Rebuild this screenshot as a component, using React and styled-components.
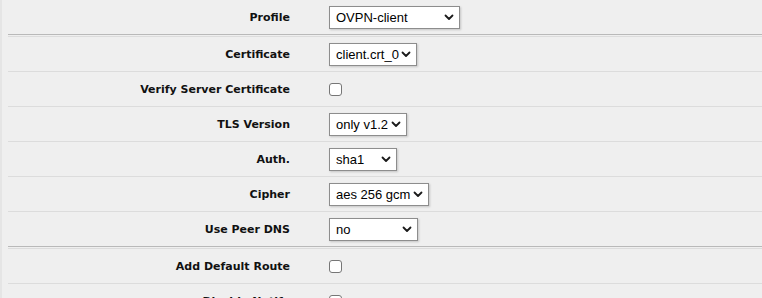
import React from 'react'
import styled, { createGlobalStyle } from 'styled-components'

const GlobalStyle = createGlobalStyle`
    body {
        margin: 0;
        background: #efefef;
        font-family: "DejaVu Sans", Verdana, sans-serif;
    }
`

const rows = [
    { label: 'Profile', type: 'select', value: 'OVPN-client', width: 131, sectionEnd: true },
    { label: 'Certificate', type: 'select', value: 'client.crt_0', width: 88 },
    { label: 'Verify Server Certificate', type: 'checkbox' },
    { label: 'TLS Version', type: 'select', value: 'only v1.2', width: 78 },
    { label: 'Auth.', type: 'select', value: 'sha1', width: 68 },
    { label: 'Cipher', type: 'select', value: 'aes 256 gcm', width: 100 },
    { label: 'Use Peer DNS', type: 'select', value: 'no', width: 89, sectionEnd: true },
    { label: 'Add Default Route', type: 'checkbox' },
    { label: 'Disable Notify', type: 'checkbox' },
]

function Chevron() {
    return (
        <svg width="10" height="7" viewBox="0 0 10 7">
            <path d="M1.5 1.5 L5 5 L8.5 1.5" fill="none" stroke="#1a1a1a" strokeWidth="1.8" strokeLinecap="round" strokeLinejoin="round" />
        </svg>
    )
}

function Field({ row }) {
    if (row.type === 'checkbox') {
        return <Checkbox type="checkbox" readOnly />
    }
    return (
        <SelectWrap $width={row.width}>
            <Select defaultValue={row.value}>
                <option>{row.value}</option>
            </Select>
            <Arrow>
                <Chevron />
            </Arrow>
        </SelectWrap>
    )
}

export default function App() {
    return (
        <>
            <GlobalStyle />
            <Page>
                {rows.map((row) => (
                    <React.Fragment key={row.label}>
                        <Row $sectionEnd={row.sectionEnd}>
                            <Label>{row.label}</Label>
                            <Control>
                                <Field row={row} />
                            </Control>
                        </Row>
                        {row.sectionEnd && <Divider />}
                    </React.Fragment>
                ))}
            </Page>
        </>
    )
}

const Page = styled.div`
    height: 298px;
    overflow: hidden;
    border-left: 2px solid #e5e5e5;
    padding-left: 6px;
`

const Row = styled.div`
    display: grid;
    grid-template-columns: 282px 1fr;
    column-gap: 39px;
    align-items: center;
    height: 34px;
    border-bottom: 1px solid ${(p) => (p.$sectionEnd ? '#b9b9b9' : '#dcdcdc')};
`

const Divider = styled.div`
    height: 1px;
    margin-top: 1px;
    background: #dcdcdc;
`

const Label = styled.div`
    text-align: right;
    font-weight: bold;
    font-size: 11px;
    color: #111;
`

const Control = styled.div`
    display: flex;
    align-items: center;
`

const SelectWrap = styled.span`
    position: relative;
    display: inline-block;
    width: ${(p) => p.$width}px;
    height: 23px;
`

const Select = styled.select`
    appearance: none;
    width: 100%;
    height: 100%;
    box-sizing: border-box;
    margin: 0;
    padding: 0 0 0 6px;
    border: 1px solid #8d8d8d;
    border-radius: 0;
    background: #fff;
    box-shadow: 1px 1px 2px rgba(0, 0, 0, 0.18);
    font-family: "Liberation Sans", Arial, sans-serif;
    font-size: 13px;
    color: #000;
    outline: none;
`

const Arrow = styled.span`
    position: absolute;
    right: 6px;
    top: 8px;
    display: flex;
    pointer-events: none;
`

const Checkbox = styled.input`
    appearance: none;
    margin: 0;
    width: 13px;
    height: 13px;
    box-sizing: border-box;
    border: 1px solid #767676;
    border-radius: 3px;
    background: #fff;
`
